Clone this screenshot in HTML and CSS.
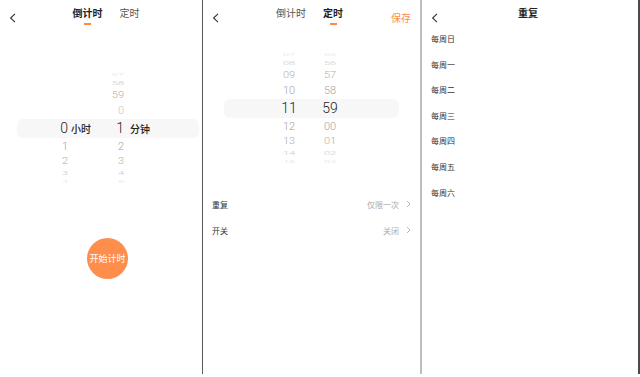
FILE: index.html
```html
<!DOCTYPE html>
<html lang="zh-CN">
<head>
  <meta charset="UTF-8" />
  <meta name="viewport" content="width=device-width, initial-scale=1.0" />
  <title>倒计时 / 定时</title>
  <link rel="stylesheet" href="styles.css">
</head>
<body>
  <div class="screens">
    <!-- countdown -->
    <section class="screen screen-crop">
      <div class="screen-inner">
        <header class="nav">
          <div class="nav-left">
            <svg class="back" width="7" height="10" viewBox="0 0 7 10"><path d="M6 0.8L1.6 5 6 9.2" /></svg>
          </div>
          <div class="tabs">
            <div class="tab active"><span>倒计时</span><i class="tab-line"></i></div>
            <div class="tab"><span>定时</span></div>
          </div>
          <div class="nav-right"></div>
        </header>

        <div class="wheel wheel-countdown">
          <div class="wheel-row d4"><span class="num"></span><span class="unit"></span><span class="num">57</span></div>
          <div class="wheel-row d3"><span class="num"></span><span class="unit"></span><span class="num">58</span></div>
          <div class="wheel-row d2"><span class="num"></span><span class="unit"></span><span class="num">59</span></div>
          <div class="wheel-row d1 faint"><span class="num"></span><span class="unit"></span><span class="num">0</span></div>
          <div class="wheel-row sel"><span class="num">0</span><span class="unit">小时</span><span class="num">1</span><span class="unit">分钟</span></div>
          <div class="wheel-row d1"><span class="num">1</span><span class="unit"></span><span class="num">2</span></div>
          <div class="wheel-row d2"><span class="num">2</span><span class="unit"></span><span class="num">3</span></div>
          <div class="wheel-row d3"><span class="num">3</span><span class="unit"></span><span class="num">4</span></div>
          <div class="wheel-row d4"><span class="num">4</span><span class="unit"></span><span class="num">5</span></div>
        </div>

        <button class="start-btn">开始计时</button>
      </div>
    </section>
    <div class="divider divider-dark"></div>

    <!-- alarm -->
    <section class="screen screen-mid">
      <header class="nav">
        <div class="nav-left">
          <svg class="back" width="7" height="10" viewBox="0 0 7 10"><path d="M6 0.8L1.6 5 6 9.2" /></svg>
        </div>
        <div class="tabs">
          <div class="tab"><span>倒计时</span></div>
          <div class="tab active"><span>定时</span><i class="tab-line"></i></div>
        </div>
        <div class="nav-right"><span class="save">保存</span></div>
      </header>

      <div class="wheel wheel-clock">
        <div class="wheel-row d4"><span class="num">07</span><span class="num">55</span></div>
        <div class="wheel-row d3"><span class="num">08</span><span class="num">56</span></div>
        <div class="wheel-row d2"><span class="num">09</span><span class="num">57</span></div>
        <div class="wheel-row d1"><span class="num">10</span><span class="num">58</span></div>
        <div class="wheel-row sel"><span class="num">11</span><span class="num">59</span></div>
        <div class="wheel-row d1"><span class="num">12</span><span class="num">00</span></div>
        <div class="wheel-row d2"><span class="num">13</span><span class="num">01</span></div>
        <div class="wheel-row d3"><span class="num">14</span><span class="num">02</span></div>
        <div class="wheel-row d4"><span class="num">15</span><span class="num">03</span></div>
      </div>

      <div class="settings">
        <div class="setting-row">
          <span>重复</span>
          <span class="setting-value">仅限一次<svg class="arrow" width="5" height="8" viewBox="0 0 5 8"><path d="M1 1l3 3-3 3" /></svg></span>
        </div>
        <div class="setting-row">
          <span>开关</span>
          <span class="setting-value">关闭<svg class="arrow" width="5" height="8" viewBox="0 0 5 8"><path d="M1 1l3 3-3 3" /></svg></span>
        </div>
      </div>
    </section>
    <div class="divider divider-light"></div>

    <!-- repeat -->
    <section class="screen">
      <header class="nav">
        <div class="nav-left">
          <svg class="back" width="7" height="10" viewBox="0 0 7 10"><path d="M6 0.8L1.6 5 6 9.2" /></svg>
        </div>
        <div class="title">重复</div>
        <div class="nav-right"></div>
      </header>
      <ul class="day-list">
        <li>每周日</li>
        <li>每周一</li>
        <li>每周二</li>
        <li>每周三</li>
        <li>每周四</li>
        <li>每周五</li>
        <li>每周六</li>
      </ul>
    </section>
    <div class="divider divider-dark divider-wide"></div>
  </div>
</body>
</html>
```

FILE: styles.css
```css
body {
  margin: 0;
  background: #fff;
  font-family: Roboto, "Noto Sans CJK SC", sans-serif;
  color: #333;
}
.screens {
  display: flex;
  height: 374px;
}
.screen {
  width: 216px;
  flex: none;
  overflow: hidden;
}
.screen-crop {
  width: 202px;
}
.screen-mid {
  width: 217px;
}
.screen-inner {
  width: 216px;
}
.divider {
  width: 1px;
  flex: none;
}
.divider-dark {
  background: #5a5a5a;
}
.divider-light {
  width: 2px;
  background: #bdbdbd;
}
.divider-wide {
  width: 2px;
  background: #4a4a4a;
}

/* top bar */
.nav {
  display: flex;
  height: 28px;
  align-items: flex-start;
}
.nav-left {
  width: 38px;
  padding: 8px 0 0 9px;
  box-sizing: border-box;
}
.nav-right {
  width: 42px;
  padding: 7px 9px 0 0;
  box-sizing: border-box;
  text-align: right;
}
.back path {
  fill: none;
  stroke: #333;
  stroke-width: 1.1;
}
.tabs {
  flex: 1;
  display: flex;
  justify-content: center;
  gap: 17px;
  padding-top: 7px;
}
.tab {
  display: flex;
  flex-direction: column;
  align-items: center;
  font-family: "Noto Sans CJK SC", sans-serif;
  font-size: 10px;
  line-height: 12px;
  color: #555;
}
.tab.active {
  color: #222;
  font-weight: bold;
}
.tab-line {
  width: 7px;
  height: 2px;
  margin-top: 4px;
  background: #ff8a45;
}
.save {
  font-family: "Noto Sans CJK SC", sans-serif;
  font-size: 10px;
  line-height: 12px;
  color: #ff8c4b;
}
.title {
  flex: 1;
  text-align: center;
  padding-top: 7px;
  font-family: "Noto Sans CJK SC", sans-serif;
  font-size: 10px;
  line-height: 12px;
  font-weight: bold;
  color: #222;
}

/* wheel picker */
.wheel-row {
  display: flex;
  overflow: hidden;
  font-size: 11px;
  font-weight: 300;
}
.wheel-row .num,
.wheel-row .unit {
  display: block;
}
.d4 { height: 6px; line-height: 6px; color: #e2e2e2; }
.d3 { height: 11px; line-height: 11px; color: #cacaca; }
.d2 { height: 13px; line-height: 13px; color: #b0b0b0; }
.d1 { height: 17px; line-height: 17px; color: #a6a6a6; }
.d1.faint { color: #c8c8c8; }
.d4 .num { transform: scaleY(0.25); }
.d3 .num { transform: scaleY(0.5); }
.d2 .num { transform: scaleY(0.8); }
.sel {
  height: 19px;
  line-height: 19px;
  background: #f7f7f7;
  border-radius: 6px;
  color: #1e1e1e;
  font-size: 14px;
  font-weight: 300;
}

.wheel-countdown {
  margin: 44px 17px 0;
}
.wheel-countdown .num:nth-child(1) {
  width: 51px;
  text-align: right;
}
.wheel-countdown .unit:nth-child(2) {
  width: 42px;
  padding-left: 3px;
  box-sizing: border-box;
}
.wheel-countdown .num:nth-child(3) {
  width: 14px;
  text-align: right;
}
.wheel-countdown .unit:nth-child(4) {
  padding-left: 6px;
}
.wheel-countdown .unit {
  font-family: "Noto Sans CJK SC", sans-serif;
  font-size: 10px;
  font-weight: 500;
  color: #222;
}

.wheel-clock {
  margin: 24px 21px 0;
}
.wheel-clock .wheel-row {
  padding-left: 49px;
  gap: 9px;
}
.wheel-clock .num {
  width: 32px;
  text-align: center;
}

.start-btn {
  display: block;
  width: 41px;
  height: 41px;
  margin: 53px 0 0 87px;
  padding: 0;
  border: none;
  border-radius: 50%;
  background: #ff8d4c;
  color: #fff;
  font-family: "Noto Sans CJK SC", sans-serif;
  font-size: 9px;
}

/* settings rows */
.settings {
  margin-top: 26px;
}
.setting-row {
  display: flex;
  justify-content: space-between;
  align-items: center;
  height: 26px;
  padding: 0 9px;
  font-family: "Noto Sans CJK SC", sans-serif;
  font-size: 8px;
  color: #333;
}
.setting-value {
  display: flex;
  align-items: center;
  gap: 7px;
  color: #aaa;
}
.arrow path {
  fill: none;
  stroke: #bbb;
  stroke-width: 1;
}

/* repeat list */
.day-list {
  list-style: none;
  margin: -2px 0 0;
  padding: 0 9px;
}
.day-list li {
  height: 25.6px;
  line-height: 25.6px;
  font-family: "Noto Sans CJK SC", sans-serif;
  font-size: 8px;
  color: #333;
}
```
